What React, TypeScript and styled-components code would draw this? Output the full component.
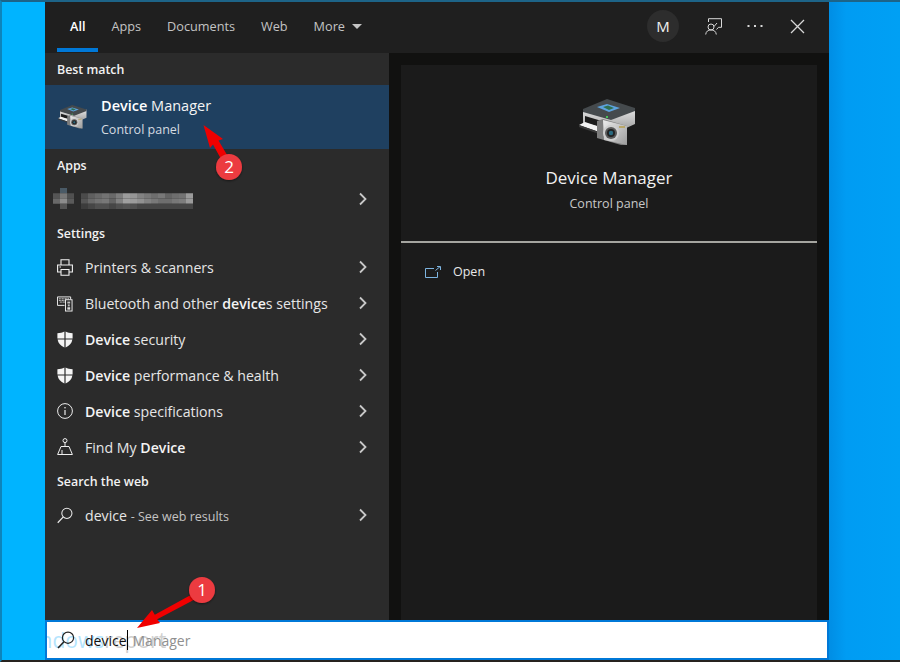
import React from 'react'
import styled, { createGlobalStyle } from 'styled-components'

const GlobalStyle = createGlobalStyle`
  html, body {
    margin: 0;
    padding: 0;
    background: #0a0a0a;
  }
  * {
    box-sizing: border-box;
  }
`

const Desktop = styled.div`
  position: relative;
  width: 900px;
  height: 662px;
  overflow: hidden;
  padding-left: 43px;
  border-top: 2px solid #1d6488;
  border-left: 2px solid #0d85bb;
  border-bottom: 2px solid #26231f;
  background: linear-gradient(90deg, #00b4ff 0%, #00b4ff 5%, #008fe6 92.3%, #009cf3 94%, #00a0f4 100%);
  font-family: 'Open Sans', 'Noto Sans', sans-serif;
  color: #fff;
`

const Window = styled.div`
  width: 784px;
  height: 658px;
  display: flex;
  flex-direction: column;
  background: #111110;
`

const Header = styled.header`
  height: 51px;
  flex: none;
  display: flex;
  align-items: stretch;
  justify-content: space-between;
  background: #1f1f1f;
`

const Tabs = styled.nav`
  display: flex;
  margin-left: 12px;
`

const Tab = styled.div<{ $active?: boolean }>`
  display: flex;
  align-items: center;
  gap: 7px;
  padding: 2px 13px 0;
  margin-bottom: 1px;
  font-size: 12.7px;
  font-weight: ${({ $active }) => ($active ? 600 : 400)};
  color: ${({ $active }) => ($active ? '#ffffff' : '#c4c4c4')};
  border-bottom: 4px solid ${({ $active }) => ($active ? '#0078d7' : 'transparent')};
`

const Caret = styled.span`
  width: 0;
  height: 0;
  border-left: 5px solid transparent;
  border-right: 5px solid transparent;
  border-top: 5px solid #c4c4c4;
`

const HeaderActions = styled.div`
  display: flex;
  align-items: center;
  margin-right: 20px;
  padding-bottom: 3px;
  gap: 18px;
`

const Avatar = styled.div`
  width: 32px;
  height: 32px;
  border-radius: 50%;
  background: #2d2d2d;
  display: flex;
  align-items: center;
  justify-content: center;
  font-size: 15px;
  color: #f0f0f0;
  margin-right: 4px;
`

const ActionIcon = styled.div`
  width: 24px;
  height: 24px;
  display: flex;
  align-items: center;
  justify-content: center;
`

const Body = styled.div`
  flex: 1;
  min-height: 0;
  display: flex;
`

const ResultsPane = styled.section`
  width: 344px;
  flex: none;
  background: #2b2b2b;
`

const SectionLabel = styled.div`
  height: 32px;
  padding-left: 12px;
  display: flex;
  align-items: center;
  font-size: 12.4px;
  font-weight: 600;
  color: #f2f2f2;
`

const BestMatch = styled.div`
  height: 64px;
  display: flex;
  align-items: center;
  padding-left: 13px;
  gap: 14px;
  background: #1f4060;
`

const BestText = styled.div`
  display: flex;
  flex-direction: column;
  gap: 6px;
  padding-bottom: 1px;
`

const BestTitle = styled.div`
  font-size: 14.5px;
  line-height: 19px;
  color: #f4f4f4;
  b {
    font-weight: 600;
    color: #fff;
  }
`

const BestSub = styled.div`
  font-size: 12.5px;
  line-height: 17px;
  color: #d5dbe0;
`

const Row = styled.div`
  height: 36px;
  display: flex;
  align-items: center;
  padding-left: 12px;
  padding-right: 21px;
`

const RowIcon = styled.div`
  width: 16px;
  height: 18px;
  flex: none;
  margin-right: 12px;
  display: flex;
  align-items: center;
  justify-content: center;
`

const RowText = styled.div`
  flex: 1;
  font-size: 14.15px;
  color: #e6e6e6;
  white-space: nowrap;
  b {
    font-weight: 600;
    color: #f4f4f4;
  }
`

const Hint = styled.span`
  font-size: 12.5px;
  color: #c4c4c4;
`

const Chevron = styled.svg`
  flex: none;
  width: 10px;
  height: 14px;
`

const Blurred = styled.svg`
  flex: 1;
  height: 21px;
  margin-left: -4px;
  margin-top: -1px;
`

const PreviewPane = styled.section`
  flex: 1;
  min-width: 0;
  padding: 12px 12px 0;
`

const PreviewCard = styled.div`
  height: 100%;
  background: #1b1b1b;
`

const PreviewHead = styled.div`
  height: 178px;
  padding-top: 34px;
  display: flex;
  flex-direction: column;
  align-items: center;
  border-bottom: 2px solid #a5a5a0;
`

const PreviewIcon = styled.div`
  height: 46px;
  margin-right: 3px;
`

const PreviewTitle = styled.div`
  margin-top: 21px;
  font-size: 17px;
  line-height: 24px;
  color: #f2f2f2;
`

const PreviewSub = styled.div`
  margin-top: 5px;
  font-size: 12.5px;
  line-height: 17px;
  color: #c8c8c8;
`

const OpenRow = styled.div`
  display: flex;
  align-items: center;
  gap: 12px;
  padding: 20px 0 0 24px;
  font-size: 12.5px;
  color: #e8e8e8;
`

const SearchBox = styled.div`
  position: relative;
  height: 40px;
  flex: none;
  display: flex;
  align-items: center;
  padding-left: 10px;
  overflow: hidden;
  background: #fff;
  border: 2px solid #0078d7;
`

const Watermark = styled.div`
  position: absolute;
  left: -29px;
  top: 0;
  font-size: 21px;
  line-height: 36px;
  color: #b4e4fd;
  white-space: nowrap;
  span {
    color: #d0d0d0;
  }
`

const SearchIcon = styled.svg`
  position: relative;
  flex: none;
  width: 18px;
  height: 18px;
  margin-right: 10px;
`

const Typed = styled.span`
  position: relative;
  font-size: 14px;
  color: #111;
`

const TextCaret = styled.span`
  position: relative;
  width: 1px;
  height: 20px;
  margin: 0 5px 0 0;
  background: #000;
`

const Ghost = styled.span`
  position: relative;
  font-size: 14px;
  color: #8f8f8f;
`

const Markup = styled.svg`
  position: absolute;
  left: -2px;
  top: -2px;
  pointer-events: none;
`

const MarkNumber = styled.text`
  font-family: 'Open Sans', 'Noto Sans', sans-serif;
  font-size: 17px;
  fill: #fff;
  text-anchor: middle;
`

const ChevronIcon = () => (
  <Chevron viewBox="0 0 10 14">
    <path d="M2 1.5 7.5 7 2 12.5" fill="none" stroke="#c8c8c8" strokeWidth="1.8" />
  </Chevron>
)

// shared by the result row and the preview, only the size differs
const DeviceIcon = ({ width }: { width: number }) => (
  <svg width={width} height={(width * 46) / 57} viewBox="0 0 57 46">
    <defs>
      <linearGradient id="body" x1="0" y1="0" x2="0" y2="1">
        <stop offset="0" stopColor="#e8e8e8" />
        <stop offset="1" stopColor="#8e8e8e" />
      </linearGradient>
      <linearGradient id="cam" x1="0" y1="0" x2="1" y2="1">
        <stop offset="0" stopColor="#ececec" />
        <stop offset="1" stopColor="#9c9c9c" />
      </linearGradient>
    </defs>
    <polygon points="4,11 30,20 56,9 56,25 32,36 4,26" fill="url(#body)" />
    <polygon points="4,10 28,0 56,9 56,12 32,21 4,13" fill="#454a4d" />
    <polygon points="18,8 28,5 41,9 30,13" fill="#5da3df" />
    <polygon points="24,8 29,6.5 35,9 30,11" fill="#2f6f4f" />
    <polygon points="6,17 26,23 26,29 6,24" fill="#1b1b1b" />
    <polygon points="0,26 6,23 24,29 20,33" fill="#f2f2f2" />
    <polygon points="0,26 20,33 20,35 0,28" fill="#3a3a3a" />
    <polygon points="18,22 24,20 48,27 48,46 42,46 18,39" fill="#7d7d7d" />
    <polygon points="24,21 48,27 48,46 25,41" fill="url(#cam)" />
    <rect x="40" y="27" width="6" height="2" fill="#b9a76a" />
    <circle cx="32" cy="34" r="8" fill="#cfcfcf" />
    <circle cx="32" cy="34" r="6" fill="#5a5a5a" />
    <circle cx="32" cy="34" r="4" fill="#222" />
    <circle cx="32" cy="34" r="2.2" fill="#2a6a80" />
    <rect x="27" y="17" width="2" height="2" fill="#47c25a" />
  </svg>
)

const PrinterIcon = () => (
  <svg width="16" height="17" viewBox="0 0 16 17" fill="none" stroke="#f2f2f2" strokeWidth="1.1">
    <path d="M4 6V.8h8V6M4 13H.6V6h14.8v7H12" />
    <path d="M4 10.5h8v5.7H4zM2.5 8h1.5" />
  </svg>
)

const BluetoothIcon = () => (
  <svg width="17" height="17" viewBox="0 0 17 17" fill="none" stroke="#f2f2f2" strokeWidth="1">
    <path d="M8 10.5H.5v-9h14V4" />
    <path d="M2 3.5h11M2 5.2h11M3 7h7" strokeDasharray="1 .6" />
    <rect x="9" y="4.5" width="7" height="12" fill="#2b2b2b" />
    <rect x="11" y="6.5" width="3" height="2" fill="#bdbdbd" stroke="none" />
    <rect x="11.5" y="9.5" width="2" height="2" fill="#bdbdbd" stroke="none" />
    <rect x="11" y="12.5" width="3" height="2.5" fill="#dcdcdc" stroke="none" />
  </svg>
)

const ShieldIcon = () => (
  <svg width="16" height="17" viewBox="0 0 16 17">
    <path d="M7.4.4C5.6 1.6 3 2 .4 2.2v5.2h7zM8.6.4c1.8 1.2 4.4 1.6 7 1.8v5.2h-7zM.6 8.6h6.8v7.9C3.6 15 1.3 12.5.6 8.6zM15.4 8.6H8.6v7.9c3.8-1.5 6.1-4 6.8-7.9z" fill="#f4f4f4" />
  </svg>
)

const InfoIcon = () => (
  <svg width="16" height="16" viewBox="0 0 16 16" fill="none" stroke="#ececec" strokeWidth="1">
    <circle cx="8" cy="8" r="7.4" />
    <path d="M8 7v5" strokeWidth="1.2" />
    <circle cx="8" cy="4.7" r=".8" fill="#ececec" stroke="none" />
  </svg>
)

const FindIcon = () => (
  <svg width="16" height="18" viewBox="0 0 16 18" fill="none" stroke="#f0f0f0" strokeWidth="1">
    <circle cx="8" cy="2.6" r="2" />
    <path d="M8 4.6V8M4 8.5h8L15.4 16.5H.6zM5 12v4" />
  </svg>
)

const LensIcon = () => (
  <svg width="17" height="17" viewBox="0 0 17 17" fill="none" stroke="#ececec" strokeWidth="1.1">
    <circle cx="10.5" cy="6.2" r="5.4" />
    <path d="M6.7 10 .8 16.2" strokeWidth="1.3" />
  </svg>
)

const rowsData: { icon: React.ReactNode; label: React.ReactNode }[] = [
  { icon: <PrinterIcon />, label: 'Printers & scanners' },
  {
    icon: <BluetoothIcon />,
    label: (
      <>
        Bluetooth and other <b>device</b>s settings
      </>
    ),
  },
  {
    icon: <ShieldIcon />,
    label: (
      <>
        <b>Device</b> security
      </>
    ),
  },
  {
    icon: <ShieldIcon />,
    label: (
      <>
        <b>Device</b> performance &amp; health
      </>
    ),
  },
  {
    icon: <InfoIcon />,
    label: (
      <>
        <b>Device</b> specifications
      </>
    ),
  },
  {
    icon: <FindIcon />,
    label: (
      <>
        Find My <b>Device</b>
      </>
    ),
  },
]

// the censored app name, one value per mosaic cell
const mosaic = [
  [0, 40, 0, 0, 0, 0, 0, 0, 0, 0, 0, 0, 0, 0, 0, 0, 0, 0, 0, 0],
  [55, 90, 50, 0, 45, 65, 75, 85, 75, 95, 125, 120, 100, 90, 80, 90, 70, 80, 85, 125],
  [75, 110, 60, 0, 55, 75, 85, 90, 70, 100, 130, 125, 115, 100, 90, 80, 80, 90, 95, 125],
  [0, 55, 0, 0, 30, 40, 50, 50, 40, 50, 55, 50, 40, 40, 40, 40, 40, 40, 40, 40],
]

const BlurredName = () => (
  <Blurred viewBox="0 0 144 21" preserveAspectRatio="xMinYMid meet">
    {mosaic.map((cells, y) =>
      cells.map((v, x) =>
        v ? (
          <rect
            key={`${x}-${y}`}
            x={x * 7}
            y={y * 5.25}
            width="7"
            height="5.25"
            fill={y === 0 ? '#4a5a66' : `rgb(${v + 30},${v + 30},${v + 30})`}
          />
        ) : null,
      ),
    )}
  </Blurred>
)

export default function App() {
  return (
    <>
      <GlobalStyle />
      <Desktop>
        <Window>
          <Header>
            <Tabs>
              <Tab $active>All</Tab>
              <Tab>Apps</Tab>
              <Tab>Documents</Tab>
              <Tab>Web</Tab>
              <Tab>
                More <Caret />
              </Tab>
            </Tabs>
            <HeaderActions>
              <Avatar>M</Avatar>
              <ActionIcon>
                <svg width="17" height="17" viewBox="0 0 17 17" fill="none" stroke="#d8d8d8" strokeWidth="1">
                  <path d="M3.5 4V.7h13v8.6h-3L11.5 11.5" />
                  <path d="M8 7l1.3 1.2L12 5" />
                  <circle cx="6" cy="9" r="3" />
                  <path d="M.7 16.5c.3-3 2.3-4.6 5.3-4.6s5 1.6 5.3 4.6" />
                </svg>
              </ActionIcon>
              <ActionIcon>
                <svg width="16" height="4" viewBox="0 0 16 4" fill="#d8d8d8">
                  <rect x="0.5" y="1" width="2" height="2" />
                  <rect x="7" y="1" width="2" height="2" />
                  <rect x="13.5" y="1" width="2" height="2" />
                </svg>
              </ActionIcon>
              <ActionIcon>
                <svg width="15" height="15" viewBox="0 0 15 15" stroke="#d8d8d8" strokeWidth="1.3">
                  <path d="M1 1l13 13M14 1 1 14" />
                </svg>
              </ActionIcon>
            </HeaderActions>
          </Header>
          <Body>
            <ResultsPane>
              <SectionLabel>Best match</SectionLabel>
              <BestMatch>
                <DeviceIcon width={29} />
                <BestText>
                  <BestTitle>
                    <b>Device</b> Manager
                  </BestTitle>
                  <BestSub>Control panel</BestSub>
                </BestText>
              </BestMatch>
              <SectionLabel>Apps</SectionLabel>
              <Row>
                <BlurredName />
                <ChevronIcon />
              </Row>
              <SectionLabel>Settings</SectionLabel>
              {rowsData.map((row, i) => (
                <Row key={i}>
                  <RowIcon>{row.icon}</RowIcon>
                  <RowText>{row.label}</RowText>
                  <ChevronIcon />
                </Row>
              ))}
              <SectionLabel>Search the web</SectionLabel>
              <Row>
                <RowIcon>
                  <LensIcon />
                </RowIcon>
                <RowText>
                  device <Hint>- See web results</Hint>
                </RowText>
                <ChevronIcon />
              </Row>
            </ResultsPane>
            <PreviewPane>
              <PreviewCard>
                <PreviewHead>
                  <PreviewIcon>
                    <DeviceIcon width={57} />
                  </PreviewIcon>
                  <PreviewTitle>Device Manager</PreviewTitle>
                  <PreviewSub>Control panel</PreviewSub>
                </PreviewHead>
                <OpenRow>
                  <svg width="16" height="12" viewBox="0 0 16 12" fill="none" stroke="#7db4e0" strokeWidth="1">
                    <path d="M9 2.5H.5v9h12V6" />
                    <path d="M10.5 4.5 15 .7M12 .5h3.5V4" />
                  </svg>
                  Open
                </OpenRow>
              </PreviewCard>
            </PreviewPane>
          </Body>
          <SearchBox>
            <Watermark>
              windows<span>report</span>
            </Watermark>
            <SearchIcon viewBox="0 0 18 18" fill="none" stroke="#222" strokeWidth="1.2">
              <circle cx="11" cy="6.7" r="5.6" />
              <path d="M7 10.8 1 17" strokeWidth="1.5" />
            </SearchIcon>
            <Typed>device</Typed>
            <TextCaret />
            <Ghost>Manager</Ghost>
          </SearchBox>
        </Window>
        <Markup width="900" height="662" viewBox="0 0 900 662">
          <defs>
            <filter id="markShadow" x="-30%" y="-30%" width="160%" height="160%">
              <feDropShadow dx="0" dy="1" stdDeviation="1" floodColor="#000" floodOpacity="0.5" />
            </filter>
          </defs>
          <path d="M137 628 152 610 154.8 614.8 193.5 593.4 196.5 598.6 157.2 619.2 160 623z" fill="#f00000" />
          <path d="M203.5 125 223 139 218.5 140.5 233 165 226 168 213 144.5 210 148z" fill="#f00000" />
          <circle cx="202" cy="590" r="13" fill="#ec3b40" filter="url(#markShadow)" />
          <MarkNumber x="202" y="596">1</MarkNumber>
          <circle cx="229" cy="167" r="13" fill="#ec3b40" filter="url(#markShadow)" />
          <MarkNumber x="229" y="173">2</MarkNumber>
        </Markup>
      </Desktop>
    </>
  )
}
